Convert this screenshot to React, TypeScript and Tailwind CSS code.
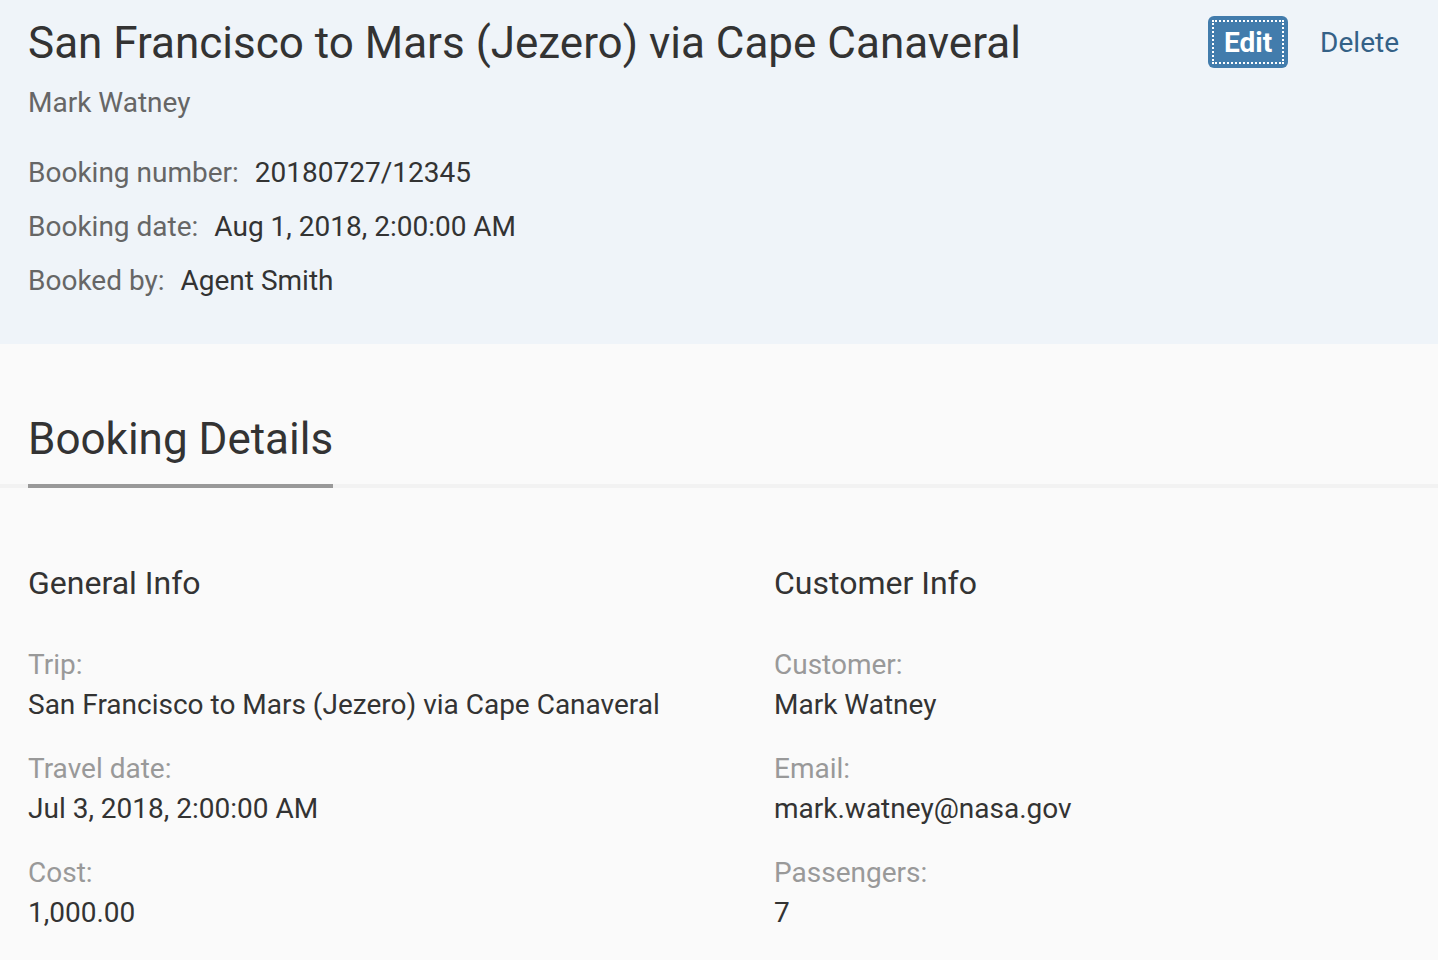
import React from "react";

type Field = { label: string; value: string };

const headerFields: Field[] = [
  { label: "Booking number:", value: "20180727/12345" },
  { label: "Booking date:", value: "Aug 1, 2018, 2:00:00 AM" },
  { label: "Booked by:", value: "Agent Smith" },
];

const groups: { title: string; fields: Field[] }[] = [
  {
    title: "General Info",
    fields: [
      { label: "Trip:", value: "San Francisco to Mars (Jezero) via Cape Canaveral" },
      { label: "Travel date:", value: "Jul 3, 2018, 2:00:00 AM" },
      { label: "Cost:", value: "1,000.00" },
    ],
  },
  {
    title: "Customer Info",
    fields: [
      { label: "Customer:", value: "Mark Watney" },
      { label: "Email:", value: "mark.watney@nasa.gov" },
      { label: "Passengers:", value: "7" },
    ],
  },
];

export default function App() {
  return (
    <div className="min-h-screen bg-[#fafafa] font-['Roboto',sans-serif] text-[28px] leading-10 text-[#333333]">
      <header className="bg-[#eff4f9] pt-4 pr-[27px] pb-[43px] pl-7">
        <div className="flex items-start justify-between gap-8">
          <h1 className="text-[44px] leading-[54px]">
            San Francisco to Mars (Jezero) via Cape Canaveral
          </h1>
          <div className="flex shrink-0 items-center">
            <button className="h-[52px] w-20 rounded-md bg-[#427cac] p-1 text-white">
              <span className="flex h-full items-center justify-center border-2 border-dotted border-white pt-0.5 font-bold">
                Edit
              </span>
            </button>
            <button className="ml-5 h-[52px] px-3 pt-0.5 text-[#346187]">Delete</button>
          </div>
        </div>
        <p className="mt-[13px] text-[#666666]">Mark Watney</p>
        <dl className="mt-[30px] flex flex-col gap-[14px]">
          {headerFields.map((f) => (
            <div key={f.label} className="flex gap-4">
              <dt className="text-[#666666]">{f.label}</dt>
              <dd>{f.value}</dd>
            </div>
          ))}
        </dl>
      </header>
      <main>
        <div className="border-b-4 border-[#f2f2f2] px-7 pt-16">
          <h2 className="-mb-1 inline-block border-b-4 border-[#999999] pt-[5px] pb-[19px] text-[44px] leading-[52px]">
            Booking Details
          </h2>
        </div>
        <div className="grid grid-cols-2 gap-x-[110px] px-7 pt-[74px]">
          {groups.map((g) => (
            <section key={g.title}>
              <h3 className="text-[32px] leading-[42px]">{g.title}</h3>
              <dl className="mt-[41px] flex flex-col gap-6">
                {g.fields.map((f) => (
                  <div key={f.label}>
                    <dt className="text-[#999999]">{f.label}</dt>
                    <dd>{f.value}</dd>
                  </div>
                ))}
              </dl>
            </section>
          ))}
        </div>
      </main>
    </div>
  );
}
